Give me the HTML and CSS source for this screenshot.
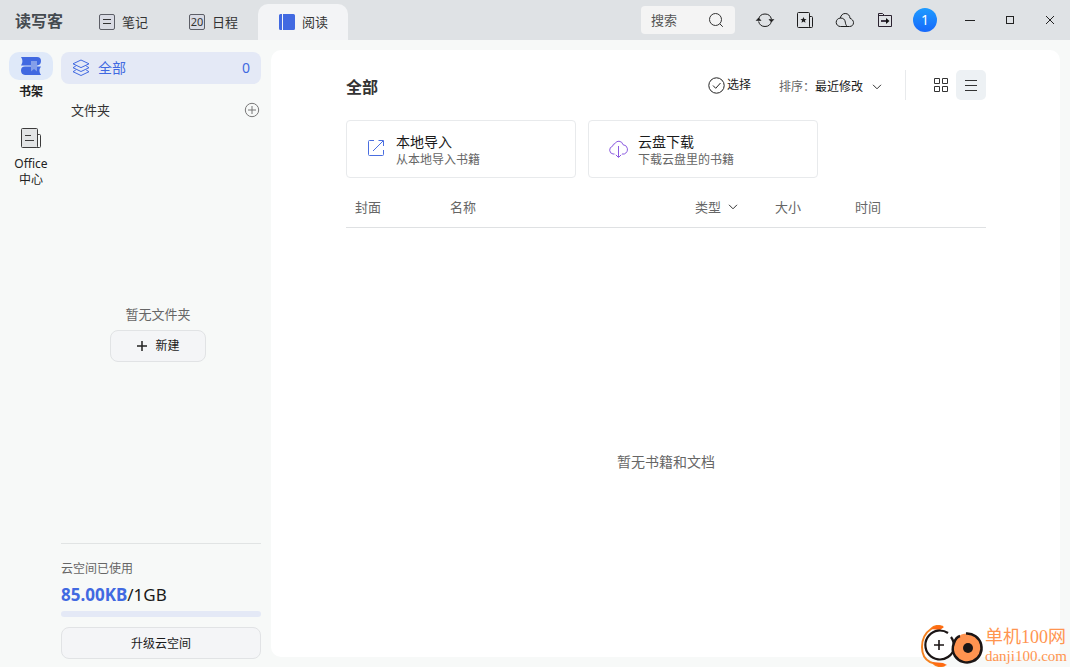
FILE: index.html
```html
<!DOCTYPE html>
<html lang="zh-CN">
<head>
<meta charset="utf-8">
<title>读写客</title>
<link rel="stylesheet" href="styles.css">
</head>
<body>
<div class="app">
  <header class="topbar">
    <div class="brand">读写客</div>
    <nav class="tabs">
      <button class="tab">
        <svg width="16" height="16" viewBox="0 0 16 16" fill="none" stroke="#5c5e66"><rect x=".5" y=".5" width="15" height="15" rx="1.5" fill="#d9dbe4"/><path d="M4 5.500h8M4 9.500h8" stroke="#333"/></svg>
        <span>笔记</span>
      </button>
      <button class="tab">
        <span class="day">20</span>
        <span>日程</span>
      </button>
      <button class="tab tab-active">
        <svg width="16" height="16" viewBox="0 0 16 16" fill="#4169e1"><path d="M1.500 0H3v16H1.500Q0 16 0 14.500v-13Q0 0 1.500 0zM4 0h10.500Q16 0 16 1.500v13q0 1.500-1.500 1.500H4z"/></svg>
        <span>阅读</span>
      </button>
    </nav>
    <div class="search">
      <input type="text" placeholder="搜索" aria-label="搜索">
      <svg width="16" height="16" viewBox="0 0 16 16" fill="none" stroke="#333"><circle cx="7.500" cy="7.500" r="6"/><path d="M11.800 11.800l3 3"/></svg>
    </div>
    <div class="tools">
      <button class="tool" aria-label="同步"><svg width="20" height="20" viewBox="0 0 20 20" fill="none" stroke="#1d1d1d"><path d="M3.600 9A6.600 6.600 0 0 1 16.400 9M16.400 11.500A6.600 6.600 0 0 1 3.600 11.500"/><path d="M1.200 10.500L3.600 8l2.400 2.500zM14 9.500h4.800l-2.400 2.500z" fill="#1d1d1d" stroke-width=".6"/></svg></button>
      <button class="tool" aria-label="收藏"><svg width="20" height="20" viewBox="0 0 20 20" fill="none" stroke="#1d1d1d"><rect x="2.500" y="2.500" width="12" height="15" rx="1"/><path d="M14.500 6.500h2q1 0 1 1v9q0 1-1 1h-3"/><path d="M8.500 7l.9 2 2.200.2-1.700 1.400.6 2.200-2-1.200-2 1.200.6-2.200-1.700-1.400 2.200-.2z" fill="#1d1d1d" stroke="none"/></svg></button>
      <button class="tool" aria-label="云端"><svg width="20" height="20" viewBox="0 0 20 20" fill="none" stroke="#1d1d1d"><path d="M5.500 16.500a4.200 4.200 0 0 1-.2-8.400C6 5 7.800 3.500 10.200 3.500c3 0 4.700 2.200 4.800 4.800 2 .8 3.500 2.300 3.500 4.400 0 2.300-1.600 3.800-4 3.800z"/><path d="M5.300 8.100c3-.3 4.600 1.400 5 4 .2 1.600 .6 3 1.800 4.200"/></svg></button>
      <button class="tool" aria-label="导出"><svg width="20" height="20" viewBox="0 0 20 20" fill="none" stroke="#2b2230"><path d="M3.500 3.500h4l2 2h7v11h-13zM3.500 5.500h6"/><path d="M6 11h6" stroke-width="1.800"/><path d="M11 8l3.500 3-3.500 3z" fill="#111" stroke="none"/></svg></button>
      <button class="tool" aria-label="账户"><span class="avatar">1</span></button>
    </div>
    <div class="tools window-tools">
      <button class="tool" aria-label="最小化"><svg width="10" height="10" viewBox="0 0 10 10" stroke="#222"><path d="M0 5.500h10"/></svg></button>
      <button class="tool" aria-label="最大化"><svg width="10" height="10" viewBox="0 0 10 10" fill="none" stroke="#222"><rect x="1.500" y="1.500" width="7" height="7"/></svg></button>
      <button class="tool" aria-label="关闭"><svg width="10" height="10" viewBox="0 0 10 10" stroke="#222"><path d="M1 1l8 8M9 1L1 9"/></svg></button>
    </div>
  </header>

  <div class="body">
    <nav class="rail">
      <button class="rail-item rail-active">
        <span class="rail-icon"><svg width="20" height="18" viewBox="0 0 20 18"><path d="M0 0h16q4 0 4 4t-4 4.500H0Q3 4.500 0 0z" fill="#4169e1"/><path d="M20 9.500H4q-4 0-4 4T4 18h16q-3-4.500 0-8.500z" fill="#4169e1"/><path d="M10 4h6v10.500l-3-2.500-3 2.500z" fill="#849ee9"/></svg></span>
        <span>书架</span>
      </button>
      <button class="rail-item">
        <span class="rail-icon"><svg width="20" height="20" viewBox="0 0 20 20" fill="none" stroke="#3c3c3c"><rect x=".5" y=".5" width="16" height="19" rx="1" fill="#e2e4e5"/><path d="M16.500 6.500h2q1 0 1 1v11q0 1-1 1h-3M4 7.500h6M4 12.500h9"/></svg></span>
        <span>Office<br>中心</span>
      </button>
    </nav>

    <aside class="sidebar">
      <button class="all-books">
        <svg width="18" height="18" viewBox="0 0 18 18" fill="none" stroke="#4169e1"><path d="M9 1l8 3.800-8 3.800-8-3.800zM3.800 7L1 8.700l8 3.800 8-3.800L14.200 7M3.800 11L1 12.700l8 3.800 8-3.800-2.800-1.700"/></svg>
        <span>全部</span><span class="count">0</span>
      </button>
      <div class="folder-head">
        <span>文件夹</span>
        <button class="plain" aria-label="添加文件夹"><svg width="16" height="16" viewBox="0 0 16 16" fill="none" stroke="#777"><circle cx="8" cy="8" r="6.700"/><path d="M4 8h8M8 4v8"/></svg></button>
      </div>
      <div class="folder-empty">
        <span>暂无文件夹</span>
        <button class="outline new-folder"><svg width="12" height="12" viewBox="0 0 12 12" stroke="#222" stroke-width="1.500"><path d="M1 6h10M6 1v10"/></svg>新建</button>
      </div>
      <div class="storage">
        <label for="space">云空间已使用</label>
        <div class="usage"><strong>85.00KB</strong>/1GB</div>
        <progress id="space" value="0" max="100"></progress>
        <button class="outline">升级云空间</button>
      </div>
    </aside>

    <main class="panel">
      <div class="heading">
        <h1>全部</h1>
        <button class="plain pick"><svg width="17" height="17" viewBox="0 0 17 17" fill="none" stroke="#222"><circle cx="8.500" cy="8.500" r="7.700"/><path d="M5 8.500l2.700 2.800L12.500 6"/></svg>选择</button>
        <div class="sort">
          <label for="sort">排序：</label>
          <select id="sort"><option>最近修改</option></select>
          <svg width="10" height="6" viewBox="0 0 10 6" fill="none" stroke="#333"><path d="M1 .8l4 4 4-4"/></svg>
        </div>
        <div class="views">
          <button class="view" aria-label="网格"><svg width="14" height="14" viewBox="0 0 14 14" fill="none" stroke="#333"><path d="M.5.5h5v5h-5zM8.500.5h5v5h-5zM.5 8.500h5v5h-5zM8.500 8.500h5v5h-5z"/></svg></button>
          <button class="view view-active" aria-label="列表"><svg width="14" height="14" viewBox="0 0 14 14" stroke="#333"><path d="M1 2.500h12M1 7.500h12M1 12.500h12"/></svg></button>
        </div>
      </div>
      <div class="cards">
        <button class="card">
          <svg width="20" height="20" viewBox="0 0 20 20" fill="none" stroke="#4a6ee0"><path d="M8 1.500H3.500q-1 0-1 1v13q0 1 1 1h13q1 0 1-1V11M12.500 1.500h5V7M17 2L7 12"/></svg>
          <span class="card-text"><b>本地导入</b><small>从本地导入书籍</small></span>
        </button>
        <button class="card">
          <svg width="20" height="20" viewBox="0 0 20 20" fill="none" stroke="#8b5be0"><path d="M6.500 15H5a4 4 0 0 1-.4-7.800Q5 4.800 7 4.600 8.200 2 11 2.200q3.300.3 4 3.500 3.500.3 4.300 3.500.8 4-3 5.800H14"/><path d="M10.500 7v11M7.800 15.800l2.700 2.700 2.700-2.700"/></svg>
          <span class="card-text"><b>云盘下载</b><small>下载云盘里的书籍</small></span>
        </button>
      </div>
      <table class="books">
        <thead><tr>
          <th class="c-cover">封面</th><th>名称</th>
          <th class="c-small"><button class="plain type">类型<svg width="10" height="6" viewBox="0 0 10 6" fill="none" stroke="#333"><path d="M1 .8l4 4 4-4"/></svg></button></th>
          <th class="c-small">大小</th><th class="c-time">时间</th>
        </tr></thead>
      </table>
      <div class="empty">暂无书籍和文档</div>
    </main>
  </div>

  <div class="watermark">
    <svg width="64" height="42" viewBox="0 0 64 42" fill="none">
      <path d="M22 2Q15-1 10 4 1 10 1 22q0 11 8 15l3 1q5 5 12 2" stroke="#f58220" stroke-width="2"/>
      <path d="M10 4Q16-2 23 2l-4 3zM11 37q7 7 15 3l-4-2z" fill="#ff6a13"/>
      <circle cx="19" cy="20" r="14.500" fill="#fff"/>
      <path d="M27 8A14.500 14.500 0 1 0 27 32Q33 28 33 22q0-6-3-10" stroke="#1b1515" stroke-width="2.200"/>
      <path d="M13 20h10M18 15v10" stroke="#1b1515" stroke-width="1.600"/>
      <circle cx="46" cy="23" r="14.500" fill="#ff9350"/>
      <path d="M45 8.500A14.500 14.500 0 1 1 34 31Q30 25 33 18q2-6 6-7" stroke="#1b1515" stroke-width="2.500"/>
      <circle cx="47" cy="23" r="5" fill="#1b1515"/>
    </svg>
    <div class="watermark-text"><span>单机100网</span><small>danji100.com</small></div>
  </div>
</div>
</body>
</html>
```

FILE: styles.css
```css
* { box-sizing: border-box; }
body {
  margin: 0;
  background: #f7f9f8;
  color: #1a1a1a;
  font: 12px/16px "Noto Sans", "Noto Sans CJK SC", sans-serif;
}
button, input, select { font: inherit; color: inherit; }
button { padding: 0; border: 0; background: none; }
svg { display: block; flex: none; }
.app { display: flex; flex-direction: column; height: 100vh; }

.topbar { display: flex; height: 40px; background: #dfe2e5; }
.brand { width: 78px; padding-left: 15px; font-size: 16px; font-weight: 700; line-height: 42px; color: #444a50; }
.tabs { display: flex; padding-top: 4px; margin-right: auto; }
.tab {
  display: flex;
  align-items: center;
  gap: 7px;
  width: 90px;
  padding-left: 21px;
  border-radius: 10px 10px 0 0;
  font-size: 13px;
  color: #333;
}
.tab-active { background: #f3f4f6; }
.day {
  width: 16px;
  height: 16px;
  border: 1px solid #5c5e66;
  border-radius: 2px;
  background: #d9dbe4;
  font-size: 11px;
  line-height: 14px;
  display: flex;
  justify-content: center;
}
.search {
  display: flex;
  align-items: center;
  width: 94px;
  height: 28px;
  margin: 6px 10px 0 0;
  padding: 0 11px 0 10px;
  border-radius: 4px;
  background: #f4f4f4;
}
.search input { flex: 1; min-width: 0; padding: 0; border: 0; background: none; font-size: 13px; outline: 0; }
.search input::placeholder { color: #555; opacity: 1; }
.tools { display: flex; }
.window-tools { margin-left: 5px; }
.tool { display: flex; align-items: center; justify-content: center; width: 40px; height: 40px; }
.avatar {
  width: 24px;
  height: 24px;
  border-radius: 50%;
  background: linear-gradient(#1e9bff, #1668fb);
  color: #fff;
  font-size: 14px;
  line-height: 24px;
}

.body { display: flex; flex: 1; min-height: 0; }
.rail { display: flex; flex-direction: column; align-items: center; gap: 24px; width: 62px; padding-top: 12px; margin-right: -1px; }
.rail-item { display: flex; flex-direction: column; align-items: center; gap: 4px; color: #222; }
.rail-active { font-weight: 700; }
.rail-icon { display: flex; align-items: center; justify-content: center; width: 44px; height: 28px; border-radius: 10px; }
.rail-active .rail-icon { background: #dfe9f9; }

.sidebar { display: flex; flex-direction: column; width: 200px; padding: 12px 0 8px; }
.all-books {
  display: flex;
  align-items: center;
  gap: 8px;
  height: 32px;
  padding: 0 11px;
  border-radius: 8px;
  background: #e4e9f6;
  font-size: 14px;
  color: #4169e1;
}
.count { margin-left: auto; }
.folder-head {
  display: flex;
  justify-content: space-between;
  align-items: center;
  height: 40px;
  padding: 12px 1px 0 10px;
  font-size: 13px;
  color: #333;
}
.folder-empty {
  display: flex;
  flex: 1;
  flex-direction: column;
  align-items: center;
  justify-content: center;
  gap: 8px;
  padding-right: 6px;
  font-size: 13px;
  color: #666;
}
.outline {
  display: flex;
  align-items: center;
  justify-content: center;
  gap: 7px;
  height: 32px;
  padding-top: 1px;
  border: 1px solid #e1e3e5;
  border-radius: 8px;
  background: #f4f5f7;
  font-size: 12px;
  color: #1a1a1a;
}
.new-folder { width: 96px; }
.storage { display: flex; flex-direction: column; padding-top: 17px; border-top: 1px solid #e1e4e4; color: #666; }
.usage { margin: 8px 0 6px; font-size: 17px; line-height: 20px; color: #1a1a1a; }
.usage strong { color: #4169e1; }
progress { appearance: none; width: 100%; height: 6px; margin-bottom: 10px; border: 0; border-radius: 3px; overflow: hidden; background: #e4e9f6; }
progress::-webkit-progress-bar { background: #e4e9f6; }
progress::-webkit-progress-value { background: #4169e1; }

.panel {
  display: flex;
  flex: 1;
  flex-direction: column;
  margin: 10px;
  padding: 20px 74px 0 75px;
  border-radius: 10px;
  background: #fff;
}
.heading { display: flex; align-items: center; height: 30px; }
h1 { margin: 0 auto 0 0; padding-top: 4px; font-size: 16px; line-height: 20px; color: #333; }
.pick { display: flex; align-items: center; gap: 2px; margin-right: 28px; }
.sort { display: flex; align-items: center; padding-top: 3px; color: #666; }
.sort select { width: 48px; margin-right: 9px; padding: 0; border: 0; appearance: none; background: none; color: #1a1a1a; }
.views { display: flex; margin-left: 23px; padding-left: 20px; border-left: 1px solid #e8eaec; }
.view { display: flex; align-items: center; justify-content: center; width: 30px; height: 30px; border-radius: 5px; }
.view-active { background: #edf1f4; }

.cards { display: flex; gap: 12px; margin-top: 20px; }
.card {
  display: flex;
  align-items: center;
  gap: 10px;
  width: 230px;
  height: 58px;
  padding: 0 19px;
  border: 1px solid #e8eaec;
  border-radius: 4px;
  text-align: left;
}
.card-text { display: flex; flex-direction: column; padding-top: 3px; line-height: 18px; }
.card-text b { font-size: 14px; font-weight: 400; }
.card-text small { font-size: 12px; color: #666; }

.books { width: 100%; margin-top: 9px; border-collapse: collapse; table-layout: fixed; border-bottom: 1px solid #dfe1e3; }
.books th { height: 40px; padding: 0 0 0 9px; font-size: 13px; font-weight: 400; text-align: left; color: #666; }
.c-cover { width: 95px; }
.c-small { width: 80px; }
.c-time { width: 140px; }
.type { display: flex; align-items: center; gap: 7px; }
.empty { display: flex; flex: 1; align-items: center; justify-content: center; padding-top: 40px; font-size: 14px; color: #666; }

.watermark { position: absolute; right: 3px; bottom: 0; display: flex; align-items: center; color: #ff9550; }
.watermark-text {
  display: flex;
  flex-direction: column;
  font-family: "Liberation Serif", "Noto Sans CJK SC", serif;
  font-size: 18px;
  line-height: 20px;
}
.watermark-text small { font-size: 15px; line-height: 18px; }
```
